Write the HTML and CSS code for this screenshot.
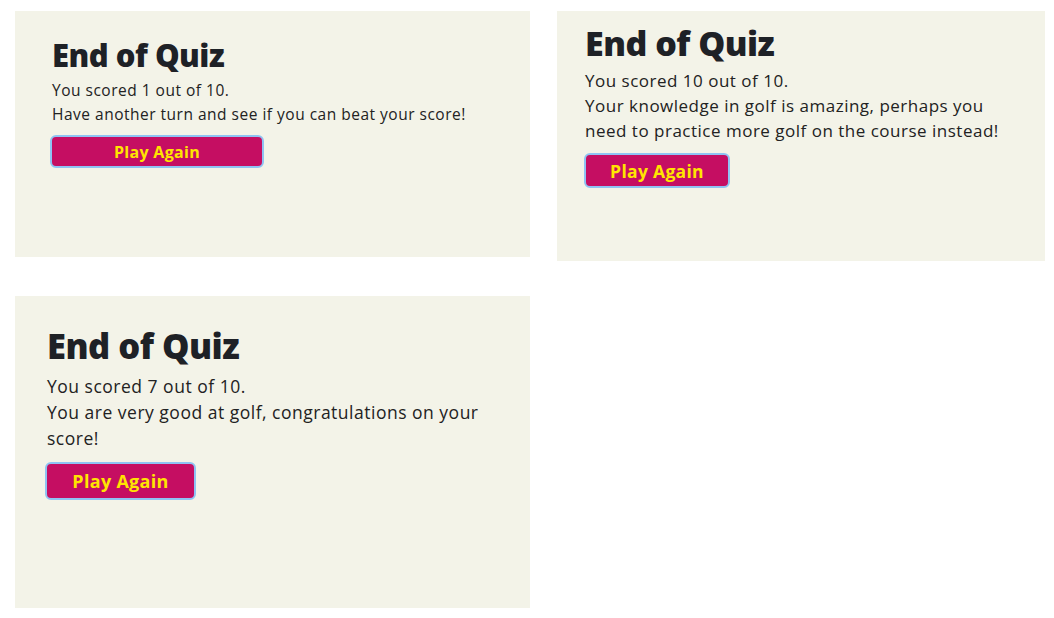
FILE: index.html
```html
<!DOCTYPE html>
<html lang="en">
<head>
<meta charset="utf-8">
<title>End of Quiz</title>
<link rel="stylesheet" href="styles.css">
</head>
<body>
<main class="board">
  <section class="card card-a">
    <h1 class="title">End of Quiz</h1>
    <p class="text">You scored 1 out of 10.</p>
    <p class="text">Have another turn and see if you can beat your score!</p>
    <button class="btn">Play Again</button>
  </section>
  <section class="card card-b">
    <h1 class="title">End of Quiz</h1>
    <p class="text">You scored 10 out of 10.</p>
    <p class="text">Your knowledge in golf is amazing, perhaps you need to practice more golf on the course instead!</p>
    <button class="btn">Play Again</button>
  </section>
  <section class="card card-c">
    <h1 class="title">End of Quiz</h1>
    <p class="text">You scored 7 out of 10.</p>
    <p class="text">You are very good at golf, congratulations on your score!</p>
    <button class="btn">Play Again</button>
  </section>
</main>
</body>
</html>
```
FILE: styles.css
```css
* { box-sizing: border-box; }
html, body { margin: 0; padding: 0; background: #ffffff; }
body { font-family: "Open Sans", "DejaVu Sans", sans-serif; color: #212529; }

.board {
  display: grid;
  grid-template-columns: 515px 488px;
  column-gap: 27px;
  row-gap: 35px;
  padding: 11px 0 0 15px;
  align-items: start;
}

.card {
  background: #f3f3e8;
  display: flex;
  flex-direction: column;
  align-items: flex-start;
}

.title { margin: 0; font-weight: 800; color: #1e2126; letter-spacing: -0.5px; }
.text { margin: 0; font-weight: 400; color: #222; letter-spacing: 0.5px; }

.btn {
  font-family: inherit;
  font-weight: 700;
  color: #ffe500;
  background: #c50e62;
  border: 2px solid #8fc3f3;
  border-radius: 6px;
  letter-spacing: 0.3px;
  cursor: pointer;
  padding: 0;
}

.card-a { height: 246px; padding: 24px 20px 0 37px; }
.card-a .title { font-size: 31px; line-height: 40px; margin-bottom: 3px; }
.card-a .text { font-size: 15.5px; line-height: 24px; }
.card-a .btn { width: 214px; height: 33px; margin-top: 9px; font-size: 16px; margin-left: -2px; }

.card-b { height: 250px; padding: 10px 35px 0 28px; }
.card-b .title { font-size: 34px; line-height: 44px; }
.card-b .text { font-size: 17px; line-height: 25px; }
.card-b .title + .text { margin-top: 3px; }
.card-b .btn { width: 146px; height: 35px; margin-top: 10px; font-size: 17.5px; margin-left: -1px; }

.card-c { height: 312px; grid-column: 1; padding: 27px 33px 0 32px; }
.card-c .title { font-size: 34.5px; line-height: 46px; }
.card-c .title + .text { margin-top: 4px; }
.card-c .text { font-size: 17.5px; line-height: 26px; }
.card-c .btn { width: 151px; height: 38px; margin-top: 11px; font-size: 18px; margin-left: -2px; }
```
